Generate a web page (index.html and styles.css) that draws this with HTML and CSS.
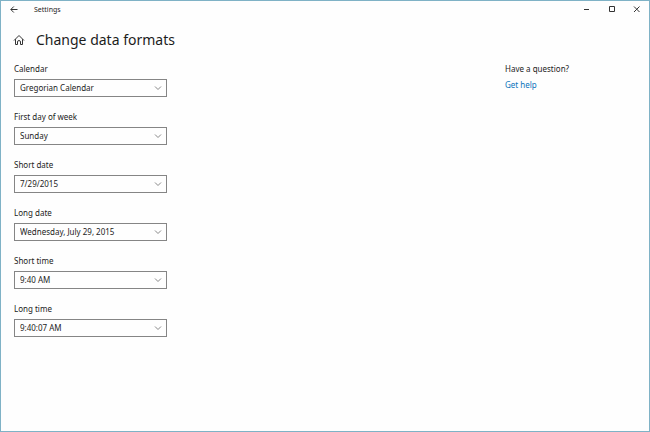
FILE: index.html
```html
<!DOCTYPE html>
<html lang="en">
<head>
    <meta charset="UTF-8">
    <meta name="viewport" content="width=device-width, initial-scale=1.0">
    <title>Settings</title>
    <link rel="stylesheet" href="styles.css">
</head>
<body>

    <div class="window">
        <header class="titlebar">
            <button class="back-btn" type="button" aria-label="Back">
                <svg width="8" height="8" viewBox="0 0 8 8"><path d="M7.5 3.5H1M3.8 0.5L0.8 3.5l3 3"/></svg>
            </button>
            <span class="app-name">Settings</span>
            <div class="window-buttons">
                <button type="button" aria-label="Minimize">
                    <svg width="7" height="7" viewBox="0 0 7 7"><path d="M1 3.5h5"/></svg>
                </button>
                <button type="button" aria-label="Maximize">
                    <svg width="7" height="7" viewBox="0 0 7 7"><path d="M1.5 0.5h5v5h-5z"/></svg>
                </button>
                <button type="button" aria-label="Close">
                    <svg width="7" height="7" viewBox="0 0 7 7"><path d="M1 0.5l5.5 5.5M6.5 0.5L1 6"/></svg>
                </button>
            </div>
        </header>

        <div class="heading">
            <a class="home" href="#" aria-label="Home">
                <svg width="12" height="12" viewBox="0 0 12 12"><path d="M1 6.5L6 1.5l5 5M2.5 5.2v5.3h2V8a1.500 1.5 0 0 1 3 0v2.5h2V5.2"/></svg>
            </a>
            <h1>Change data formats</h1>
        </div>

        <main class="content">
            <form class="formats">
                <div class="field">
                    <label for="calendar">Calendar</label>
                    <select id="calendar"><option>Gregorian Calendar</option></select>
                </div>
                <div class="field">
                    <label for="firstDay">First day of week</label>
                    <select id="firstDay"><option>Sunday</option></select>
                </div>
                <div class="field">
                    <label for="shortDate">Short date</label>
                    <select id="shortDate"><option>7/29/2015</option></select>
                </div>
                <div class="field">
                    <label for="longDate">Long date</label>
                    <select id="longDate"><option>Wednesday, July 29, 2015</option></select>
                </div>
                <div class="field">
                    <label for="shortTime">Short time</label>
                    <select id="shortTime"><option>9:40 AM</option></select>
                </div>
                <div class="field">
                    <label for="longTime">Long time</label>
                    <select id="longTime"><option>9:40:07 AM</option></select>
                </div>
            </form>

            <aside class="help">
                <p>Have a question?</p>
                <a href="#">Get help</a>
            </aside>
        </main>
    </div>

</body>
</html>
```

FILE: styles.css
```css
* { box-sizing: border-box; }
body { margin: 0; font-family: "Noto Sans", "Open Sans", sans-serif; font-size: 8px; line-height: 12px; color: #1c1c1c; background: #fefefe; }
button { display: flex; align-items: center; justify-content: center; padding: 0; border: 0; background: none; }
svg { display: block; fill: none; stroke: #333; stroke-width: 1; }

.window { min-height: 100vh; border: 1px solid #7fb2c6; }

.titlebar { display: flex; align-items: center; height: 17px; }
.back-btn { width: 25px; height: 17px; }
.app-name { flex: 1; padding-left: 8px; font-size: 7px; }
.window-buttons { display: flex; }
.window-buttons button { width: 25px; height: 17px; }

.heading { display: flex; align-items: center; gap: 11px; height: 44px; padding-left: 12px; }
.heading h1 { margin: 0; font-size: 14px; line-height: 20px; font-weight: 400; }

.content { display: flex; justify-content: space-between; padding: 1px 12px 0 13px; }
.formats { display: flex; flex-direction: column; gap: 14px; width: 153px; }
.field { display: flex; flex-direction: column; gap: 4px; }
.field select {
    appearance: none;
    height: 18px;
    padding: 0 18px 0 5px;
    border: 1px solid #858585;
    border-radius: 0;
    font: inherit;
    color: inherit;
    background: #fefefe url("data:image/svg+xml,%3Csvg xmlns='http://www.w3.org/2000/svg' width='8' height='6' viewBox='0 0 8 6'%3E%3Cpath d='M1 1.5l3 3 3-3' fill='none' stroke='%23888'/%3E%3C/svg%3E") no-repeat right 4px center;
}

.help { width: 132px; }
.help p { margin: 0 0 4px; }
.help a { color: #0a73bb; text-decoration: none; }
```
